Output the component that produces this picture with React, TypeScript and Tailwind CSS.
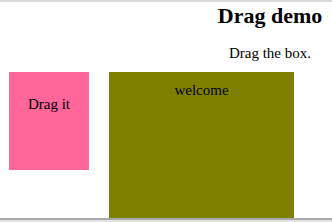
export default function App() {
  return (
    <div className="w-[332px] h-[222px] overflow-hidden bg-white flex flex-col font-['Liberation_Serif',serif] text-black">
      <div className="h-[2px] bg-[#dadada]" />
      <div className="flex-1 flex flex-col">
        {/* Header */}
        <div className="ml-[200px] w-[140px] text-center">
          <h1 className="text-[22px] font-bold leading-[26px] mt-[1px]">Drag demo</h1>
          <p className="text-[15px] leading-[18px] mt-[15px]">Drag the box.</p>
        </div>

        {/* Boxes */}
        <div className="flex items-start mt-[10px] flex-1">
          <div className="ml-[9px] w-[80px] h-[98px] bg-[#ff6699] text-center text-[15px] pt-[21px]">
            Drag it
          </div>
          <div className="ml-[20px] w-[185px] self-stretch bg-[#808000] text-center text-[15px] pt-[7px]">
            welcome
          </div>
        </div>
      </div>
      <div className="h-[2px] bg-[#a9a9a9]" />
      <div className="h-[2px] bg-[#e2e2e2]" />
    </div>
  );
}
